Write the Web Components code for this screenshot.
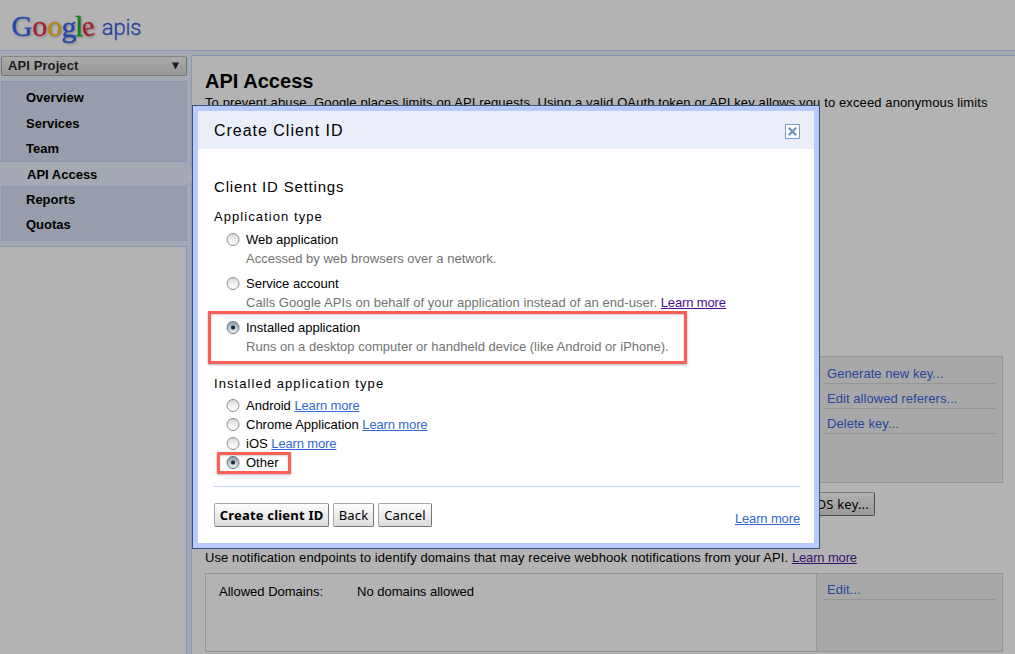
<!DOCTYPE html>
<html lang="en">
<head>
<meta charset="utf-8">
<title>API Access</title>
<style>
html,body{margin:0;height:654px;overflow:hidden;background:#b3b3b3}
body{font:13px/19px "Liberation Sans",Arial,sans-serif;color:#000}
</style>
</head>
<body>
<api-console></api-console>
<script>
const define = (name, html, setup) => customElements.define(name, class extends HTMLElement {
  connectedCallback() {
    if (this.shadowRoot) return;
    const t = document.createElement('template');
    t.innerHTML = html;
    this.attachShadow({mode: 'open'}).append(t.content.cloneNode(true));
    if (setup) setup.call(this, this.shadowRoot);
  }
});

define('brand-header', `
<style>
:host{display:block;box-sizing:border-box;height:51px;border-bottom:1px solid #8d98b5;background:#b3b3b3}
svg{display:block}
.g{font-family:"Liberation Serif",serif;filter:drop-shadow(1px 1px .8px rgba(0,0,0,.3))}
.a{font-family:Roboto,sans-serif;font-weight:300}
</style>
<svg width="200" height="50" viewBox="0 0 200 50">
<g class="g">
<text y="35.500" font-size="30" fill="#2545b0" stroke="#2545b0" stroke-width=".3" x="11.500" textLength="21" lengthAdjust="spacingAndGlyphs">G</text>
<text y="36" font-size="30" fill="#a8202c" stroke="#a8202c" stroke-width=".3" x="32.300">o</text>
<text y="36" font-size="30" fill="#b8860f" stroke="#b8860f" stroke-width=".3" x="47">o</text>
<text y="36.500" font-size="30" fill="#2545b0" stroke="#2545b0" stroke-width=".3" x="61.500">g</text>
<text y="35.500" font-size="30" fill="#12801c" stroke="#12801c" stroke-width=".3" x="75">l</text>
<text y="36" font-size="29" fill="#a8202c" stroke="#a8202c" stroke-width=".3" x="82" transform="rotate(-12 88 29)">e</text>
</g>
<text class="a" x="101.800" y="35" font-size="22" fill="#1f3f9a" stroke="#1f3f9a" stroke-width=".3" textLength="39.500">apis</text>
</svg>`);

define('project-picker', `
<style>
:host{display:flex;box-sizing:border-box;height:20px;margin:0 4px 0 1px;padding:0 6px 0 6px;align-items:center;justify-content:space-between;border:1px solid #747474;border-top-color:#858585;border-radius:2px;background:linear-gradient(#aaa,#979797);font-weight:bold;color:#1c1c1c;letter-spacing:.1px}
span{margin-top:-2px}
svg{display:block}
</style>
<span><slot></slot></span><svg width="9" height="8"><path d="M1 .5h7L4.500 7.500z" fill="#1c1c1c"/></svg>`);

define('nav-item', `
<style>
:host{display:block;box-sizing:border-box;height:25.500px;line-height:25px;padding-left:24px;font-weight:bold}
</style><slot></slot>`);

define('nav-current', `
<style>
:host{display:block;position:relative;box-sizing:border-box;height:26px;line-height:27px;margin:0 -6px 0 -2px;padding-left:27px;font-weight:bold}
svg{position:absolute;left:0;top:0}
span{position:relative}
</style>
<svg width="192" height="26"><path d="M-1 .5H187L192 5.500V20.500L187 25.500H-1z" fill="#a5a9b3" stroke="#8d98b5"/></svg><span><slot></slot></span>`);

define('side-bar', `
<style>
:host{display:flex;flex-direction:column;box-sizing:border-box;width:191px;flex:none;padding-top:5px;background:#a5a9b3}
nav{box-sizing:border-box;height:160px;margin:5px 4px 5px 1px;border:1px solid #8d98b5;background:#979dab;padding-top:3px}
nav-current{margin-top:-1px}
.last{line-height:26.500px}
.rest{flex:1;border:1px solid #8d98b5;border-width:1px 1px 0 0;margin-right:4px;background:#b3b3b3}
</style>
<project-picker>API Project</project-picker>
<nav><nav-item>Overview</nav-item><nav-item>Services</nav-item><nav-item>Team</nav-item><nav-current>API Access</nav-current><nav-item>Reports</nav-item><nav-item class="last">Quotas</nav-item></nav>
<div class="rest"></div>`);

define('text-link', `
<style>
:host{display:inline;letter-spacing:-.14px}
a{color:var(--link,#3367d6);text-decoration:underline;text-underline-offset:1px}
</style><a><slot></slot></a>`);

define('action-item', `
<style>
:host{display:block;box-sizing:border-box;height:25px;padding:5px 0 0 3px;border-bottom:1px solid #969696;color:#27479b;letter-spacing:.05px}
</style><slot></slot>`);

define('info-panel', `
<style>
:host{display:flex;box-sizing:border-box;width:798px;border:1px solid #969696}
.body{flex:1;display:flex;padding:8px 13px}
.side{box-sizing:border-box;width:186px;border-left:1px solid #969696;background:#a8a8a8;padding:var(--side-top,2px) 6px 0 7px}
</style>
<div class="body"><slot></slot></div><div class="side"><slot name="actions"></slot></div>`);

define('push-button', `
<style>
:host{display:block}
button{display:flex;justify-content:center;box-sizing:border-box;height:24px;padding:1px 5px 0;width:100%;border:1px solid #a8a8a8;border-right-color:#777;border-bottom-color:#777;border-radius:2px;background:linear-gradient(#fdfdfd,#dcdcdc);font:13px/20px "Noto Sans",sans-serif;letter-spacing:.2px;color:#000;white-space:nowrap}
:host([primary]) button{font-weight:bold;letter-spacing:.2px}
:host([dim]) button{background:linear-gradient(#b0b0b0,#9a9a9a);border-color:#777 #4c4c4c #4c4c4c #777;justify-content:flex-end}
</style><button><slot></slot></button>`);

define('main-area', `
<style>
:host{display:block;box-sizing:border-box;flex:1;margin-top:4px;border:1px solid #8d98b5;border-width:1px 0 0 1px;padding:14px 0 0 13px;background:#b3b3b3;white-space:nowrap}
h1{margin:0;font-size:20px;line-height:23px;letter-spacing:.02px}
p{margin:0}
.intro{letter-spacing:.117px}
.keys{height:127px;margin-top:244px}
push-button{width:190px;margin:9px 0 0 480px}
.note{margin:32px 0 6px;line-height:19px}
.n{letter-spacing:.095px}
.note text-link{--link:#37106b}
.domains{height:79px;--side-top:1px}
.label{width:138px}
</style>
<h1>API Access</h1>
<p class="intro">To prevent abuse, Google places limits on API requests. Using a valid OAuth token or API key allows you to exceed anonymous limits</p>
<info-panel class="keys"><action-item slot="actions">Generate new key...</action-item><action-item slot="actions">Edit allowed referers...</action-item><action-item slot="actions">Delete key...</action-item></info-panel>
<push-button dim>iOS key...</push-button>
<p class="note"><span class="n">Use notification endpoints to identify domains that may receive webhook notifications from your API.</span> <text-link>Learn more</text-link></p>
<info-panel class="domains"><span class="label">Allowed Domains:</span><span>No domains allowed</span><action-item slot="actions">Edit...</action-item></info-panel>`);

define('radio-option', `
<style>
:host{display:block;position:relative;padding-left:32px;white-space:nowrap}
svg{position:absolute;left:12px;top:2px}
.mark{fill:none}
:host([checked]) .ring{fill:url(#on);stroke:#6b747f}
:host([checked]) .mark{fill:#20252c}
.desc{display:block;color:#737373;letter-spacing:.01px}
</style>
<svg width="14" height="14"><defs>
<linearGradient id="off" x2="0" y2="1"><stop stop-color="#d4d4d4"/><stop offset=".5" stop-color="#f0f0f0"/><stop offset="1" stop-color="#fff"/></linearGradient>
<linearGradient id="on" x2="0" y2="1"><stop stop-color="#8d9aaa"/><stop offset=".5" stop-color="#b5c3d2"/><stop offset="1" stop-color="#eef6fc"/></linearGradient></defs>
<circle class="ring" cx="7" cy="7.500" r="6" fill="url(#off)" stroke="#8c8c8c"/><circle class="mark" cx="7" cy="7.500" r="2"/></svg>
<slot></slot><span class="desc"><slot name="desc"></slot></span>`, function(r) {
  if (!this.querySelector('[slot=desc]')) r.querySelector('.desc').remove();
});

define('highlight-box', `
<style>
:host{display:block;position:relative}
i{position:absolute;inset:var(--inset);border:3px solid #fb6056;box-shadow:0 1px 2px rgba(0,0,0,.3),inset 0 1px 2px rgba(0,0,0,.2);pointer-events:none}
</style><slot></slot><i></i>`);

define('client-dialog', `
<style>
:host{display:flex;flex-direction:column;box-sizing:border-box;position:absolute;left:192px;top:105px;width:628px;height:444px;border:1px solid #385580;background:#fff;box-shadow:inset 0 0 0 5px #b9cbfd;padding:5px}
header{display:flex;flex:none;height:38px;padding:0 14px 0 16px;align-items:center;justify-content:space-between;background:#e9eef9;font-size:16px;letter-spacing:.98px}
header svg{margin-top:3px}
section{display:flex;flex-direction:column;padding:28px 14px 0 16px}
h2,h3{margin:0;font-weight:normal;white-space:nowrap}
h2{font-size:15px;line-height:19px;letter-spacing:.8px}
h3{font-size:13px;line-height:19px;letter-spacing:1.07px}
.first{margin:11px 0 4px}
.second{margin:18px 0 3px}
.types{display:flex;flex-direction:column;gap:6px}
.wide{--inset:-7px 113px -8px -6px}
.small{--inset:-1px 509px -2px 3px}
.visited{--link:#4a0f8c}
.c{letter-spacing:.06px}
footer{display:flex;margin-top:14px;border-top:1px solid #c3d4ec;padding-top:16px;gap:4px}
.b1{width:115px}.b2{width:41px}.b3{width:54px}
footer text-link{margin:6px 0 0 auto}
</style>
<header><span>Create Client ID</span><svg width="15" height="15"><path d="M.5 .5h14v14H.5z" fill="#fff" stroke="#759cc8"/><path d="M3.800 3.800l7.400 7.400M11.200 3.800l-7.400 7.400" stroke="#6d92bd" stroke-width="2.200"/></svg></header>
<section>
<h2>Client ID Settings</h2>
<h3 class="first">Application type</h3>
<div class="types">
<radio-option>Web application<span slot="desc">Accessed by web browsers over a network.</span></radio-option>
<radio-option>Service account<span slot="desc"><span class="c">Calls Google APIs on behalf of your application instead of an end-user.</span> <text-link class="visited">Learn more</text-link></span></radio-option>
<highlight-box class="wide"><radio-option checked>Installed application<span slot="desc">Runs on a desktop computer or handheld device (like Android or iPhone).</span></radio-option></highlight-box>
</div>
<h3 class="second">Installed application type</h3>
<radio-option>Android <text-link>Learn more</text-link></radio-option>
<radio-option>Chrome Application <text-link>Learn more</text-link></radio-option>
<radio-option>iOS <text-link>Learn more</text-link></radio-option>
<highlight-box class="small"><radio-option checked>Other</radio-option></highlight-box>
<footer><push-button class="b1" primary>Create client ID</push-button><push-button class="b2">Back</push-button><push-button class="b3">Cancel</push-button><text-link>Learn more</text-link></footer>
</section>`);

define('api-console', `
<style>
:host{display:flex;flex-direction:column;width:1015px;height:654px;overflow:hidden;position:relative}
.page{display:flex;flex:1;min-height:0;background:#a5a9b3}
</style>
<brand-header></brand-header>
<div class="page"><side-bar></side-bar><main-area></main-area></div>
<client-dialog></client-dialog>`);
</script>
</body>
</html>
